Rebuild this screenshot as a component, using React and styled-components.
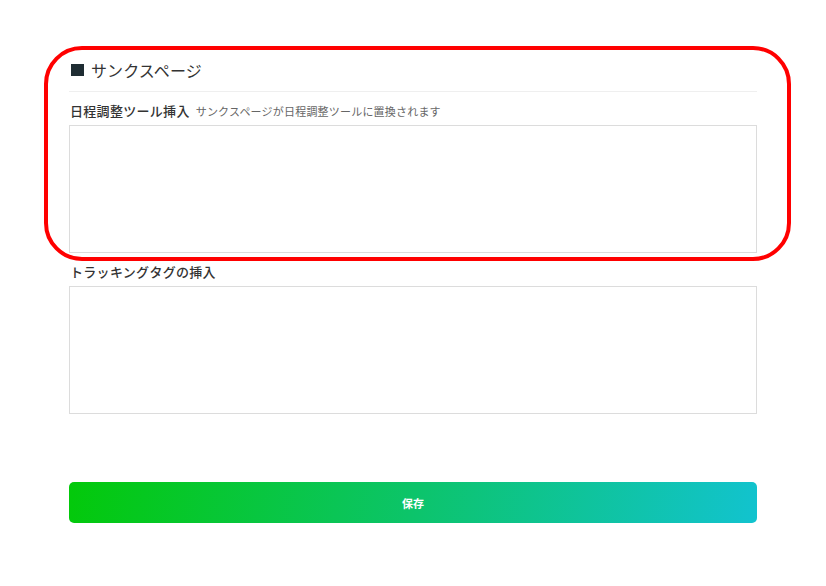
import React from "react";
import styled, { createGlobalStyle } from "styled-components";

const GlobalStyle = createGlobalStyle`
  html, body {
    margin: 0;
    padding: 0;
    background: #fff;
  }
  body {
    font-family: "Noto Sans CJK JP", "Noto Sans", sans-serif;
    color: #333;
  }
`;

function App() {
  return (
    <>
      <GlobalStyle />
      <Page>
        <Form>
          <Highlight />
          <Title>
            <Square />
            サンクスページ
          </Title>
          <Divider />
          <Field>
            <Label>
              日程調整ツール挿入
              <Note>サンクスページが日程調整ツールに置換されます</Note>
            </Label>
            <TextArea />
          </Field>
          <Field>
            <Label>トラッキングタグの挿入</Label>
            <TextArea />
          </Field>
          <SaveButton>保存</SaveButton>
        </Form>
      </Page>
    </>
  );
}

export default App;

const Page = styled.div`
  width: 826px;
  height: 586px;
  display: flex;
  justify-content: center;
  padding-top: 56px;
  box-sizing: border-box;
`;

const Form = styled.div`
  position: relative;
  width: 688px;
  display: flex;
  flex-direction: column;
`;

const Highlight = styled.div`
  position: absolute;
  left: -25px;
  top: -10px;
  width: 747px;
  height: 215px;
  border: 4.5px solid #ff0000;
  border-radius: 38px;
  box-sizing: border-box;
  pointer-events: none;
`;

const Title = styled.div`
  display: flex;
  align-items: center;
  gap: 7px;
  padding-left: 2px;
  height: 28px;
  font-size: 16px;
  color: #333;
  letter-spacing: 0.1px;
`;

const Square = styled.span`
  width: 13px;
  height: 12px;
  background: #1f2d33;
`;

const Divider = styled.div`
  height: 1px;
  background: #efefef;
  margin: 7px 0 9px;
`;

const Field = styled.div`
  display: flex;
  flex-direction: column;
  gap: 4px;
  margin-bottom: 9px;
`;

const Label = styled.div`
  display: flex;
  align-items: baseline;
  gap: 6px;
  font-size: 13px;
  font-weight: 500;
  color: #333;
  padding-left: 1px;
  line-height: 20px;
  letter-spacing: 0.3px;
`;

const Note = styled.span`
  font-size: 11px;
  font-weight: 400;
  color: #666;
  letter-spacing: 0.2px;
`;

const TextArea = styled.textarea`
  height: 128px;
  width: 100%;
  box-sizing: border-box;
  border: 1px solid #dcdcdc;
  resize: none;
  outline: none;
`;

const SaveButton = styled.button`
  margin-top: 59px;
  height: 41px;
  width: 100%;
  border: none;
  border-radius: 5px;
  background: linear-gradient(100deg, #03c90a 0%, #0cc46a 50%, #12c3cf 100%);
  color: #fff;
  font-family: "Noto Sans CJK JP", sans-serif;
  font-size: 11px;
  font-weight: 700;
  cursor: pointer;
`;
